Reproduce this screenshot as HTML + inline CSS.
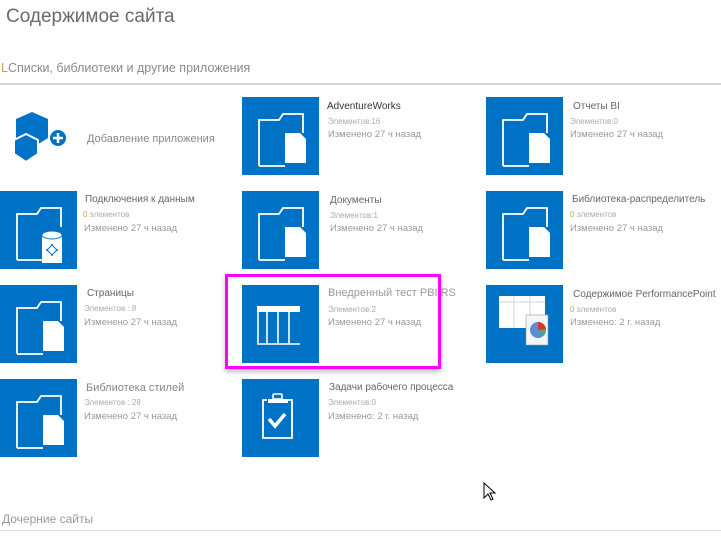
<!DOCTYPE html>
<html><head><meta charset="utf-8"><style>
body{margin:0;width:721px;height:539px;background:#fff;font-family:"Liberation Sans","DejaVu Sans",sans-serif;position:relative;overflow:hidden}
.a{position:absolute;white-space:nowrap}
.tile{position:absolute;width:77px;height:78px;background:#0072c6}
.t{position:absolute;font-size:10px;color:#666;white-space:nowrap}
.s{position:absolute;font-size:8px;color:#aaa;white-space:nowrap}
.m{position:absolute;font-size:9.5px;color:#999;white-space:nowrap}
</style></head><body>
<div class="a" style="left:6px;top:6px;font-size:19px;color:#6a6a6a">Содержимое сайта</div>
<div class="a" style="left:1px;top:61px;font-size:12.5px;color:#8a8a8a"><span style="color:#c9a04a">L</span>Списки, библиотеки и другие приложения</div>
<div class="a" style="left:0;top:83px;width:721px;height:2px;background:#d4d4d4"></div>

<svg class="a" style="left:12px;top:110px" width="58" height="56" viewBox="0 0 58 56">
<polygon points="20,2 36,9 36,28 20,38 4,28 4,9" fill="#0072c6"/>
<polygon points="14,24 26,30 26,44 14,52 2,44 2,30" fill="#0072c6" stroke="#fff" stroke-width="2"/>
<circle cx="46" cy="28" r="9" fill="#0072c6" stroke="#fff" stroke-width="2"/>
<path d="M46 23v10M41 28h10" stroke="#fff" stroke-width="2.5"/>
</svg>
<div class="a" style="left:87px;top:133px;font-size:11px;color:#888">Добавление приложения</div>

<svg width="0" height="0" style="position:absolute"><defs>
<g id="fold"><path d="M17 69V23h20l4-6h20v19M17 69h26" fill="none" stroke="#fff" stroke-width="1.8"/></g>
<g id="doc"><path d="M43 36h15l6 6v24H43z" fill="#fff"/></g>
</defs></svg>

<div class="tile" style="left:242px;top:97px"><svg width="77" height="78"><use href="#fold"/><use href="#doc"/></svg></div>
<div class="t" style="left:327px;top:101px;color:#333">AdventureWorks</div>
<div class="s" style="left:328px;top:117px">Элементов:16</div>
<div class="m" style="left:328px;top:129px">Изменено 27 ч назад</div>
<div class="tile" style="left:486px;top:97px"><svg width="77" height="78"><use href="#fold"/><use href="#doc"/></svg></div>
<div class="t" style="left:573px;top:101px">Отчеты BI</div>
<div class="s" style="left:570px;top:117px">Элементов:0</div>
<div class="m" style="left:570px;top:129px">Изменено 27 ч назад</div>

<div class="tile" style="left:0;top:191px"><svg width="77" height="78"><use href="#fold"/>
<path d="M42 44h20v28H42z" fill="#fff"/><ellipse cx="52" cy="44" rx="10" ry="4" fill="#fff" stroke="#0072c6"/>
<path d="M52 53v12M46 59h12" stroke="#0072c6" stroke-width="1.5"/><rect x="48.5" y="55.5" width="7" height="7" fill="#fff" stroke="#0072c6" transform="rotate(45 52 59)"/></svg></div>
<div class="t" style="left:85px;top:194px">Подключения к данным</div>
<div class="s" style="left:83px;top:210px"><span style="color:#c9a04a">0</span> элементов</div>
<div class="m" style="left:84px;top:223px">Изменено 27 ч назад</div>
<div class="tile" style="left:242px;top:191px"><svg width="77" height="78"><use href="#fold"/><use href="#doc"/></svg></div>
<div class="t" style="left:330px;top:195px">Документы</div>
<div class="s" style="left:330px;top:211px">Элементов:1</div>
<div class="m" style="left:330px;top:223px">Изменено 27 ч назад</div>
<div class="tile" style="left:486px;top:191px"><svg width="77" height="78"><use href="#fold"/><use href="#doc"/></svg></div>
<div class="t" style="left:572px;top:194px">Библиотека-распределитель</div>
<div class="s" style="left:570px;top:210px"><span style="color:#c9a04a">0</span> элементов</div>
<div class="m" style="left:570px;top:223px">Изменено 27 ч назад</div>

<div class="tile" style="left:0;top:285px"><svg width="77" height="78"><use href="#fold"/><use href="#doc"/></svg></div>
<div class="t" style="left:87px;top:288px">Страницы</div>
<div class="s" style="left:84px;top:304px">Элементов : 8</div>
<div class="m" style="left:84px;top:317px">Изменено 27 ч назад</div>
<div class="tile" style="left:242px;top:285px"><svg width="77" height="78">
<rect x="15" y="21" width="43" height="6" fill="#fff"/>
<path d="M16 27v32h42M16 59h41M25 27v32M36 27v32M47 27v32" fill="none" stroke="#fff" stroke-width="1.6"/></svg></div>
<div class="a" style="left:328px;top:287px;font-size:11px;color:#999">Внедренный тест PBI RS</div>
<div class="s" style="left:328px;top:305px">Элементов:2</div>
<div class="m" style="left:328px;top:317px">Изменено 27 ч назад</div>
<div class="a" style="left:225px;top:274px;width:210px;height:89px;border:3px solid #f0f;box-shadow:0 3px 5px rgba(0,0,0,.25)"></div>
<div class="tile" style="left:486px;top:285px"><svg width="77" height="78">
<rect x="13" y="11" width="46" height="32" fill="#fff"/><path d="M13 17h46M28 11v32M44 11v32" stroke="#c8d4e0"/>
<rect x="40" y="30" width="22" height="30" fill="#f4f6f8" stroke="#999" stroke-width=".6"/>
<circle cx="52" cy="45" r="8" fill="#5b8fd0"/><path d="M52 45V37a8 8 0 0 1 8 7z" fill="#d33"/><path d="M52 45h8a8 8 0 0 1-2 5z" fill="#5a5"/></svg></div>
<div class="t" style="left:573px;top:289px">Содержимое PerformancePoint</div>
<div class="s" style="left:570px;top:305px"><span style="color:#c9a04a">0</span> элементов</div>
<div class="m" style="left:570px;top:317px">Изменено: 2 г. назад</div>

<div class="tile" style="left:0;top:379px"><svg width="77" height="78"><use href="#fold"/><use href="#doc"/></svg></div>
<div class="a" style="left:86px;top:382px;font-size:11px;color:#888">Библиотека стилей</div>
<div class="s" style="left:84px;top:398px">Элементов : 28</div>
<div class="m" style="left:84px;top:411px">Изменено 27 ч назад</div>
<div class="tile" style="left:242px;top:379px"><svg width="77" height="78">
<path d="M25 21h-4v38h29V21h-4" fill="none" stroke="#fff" stroke-width="1.8"/>
<rect x="31" y="15" width="9" height="5" rx="1" fill="none" stroke="#fff" stroke-width="1.6"/>
<path d="M26 20h20v4H26z" fill="#fff"/>
<path d="M27 40l6 7 10-12" fill="none" stroke="#fff" stroke-width="3.5"/></svg></div>
<div class="t" style="left:329px;top:382px">Задачи рабочего процесса</div>
<div class="s" style="left:328px;top:398px">Элементов:0</div>
<div class="m" style="left:328px;top:411px">Изменено: 2 г. назад</div>

<svg class="a" style="left:483px;top:482px" width="14" height="20"><path d="M1 1v15l4-4 3 6 2-1-3-6h5z" fill="#fff" stroke="#000"/></svg>
<div class="a" style="left:2px;top:512px;font-size:12px;color:#999">Дочерние сайты</div>
<div class="a" style="left:0;top:530px;width:721px;height:1px;background:#e0e0e0"></div>
</body></html>
